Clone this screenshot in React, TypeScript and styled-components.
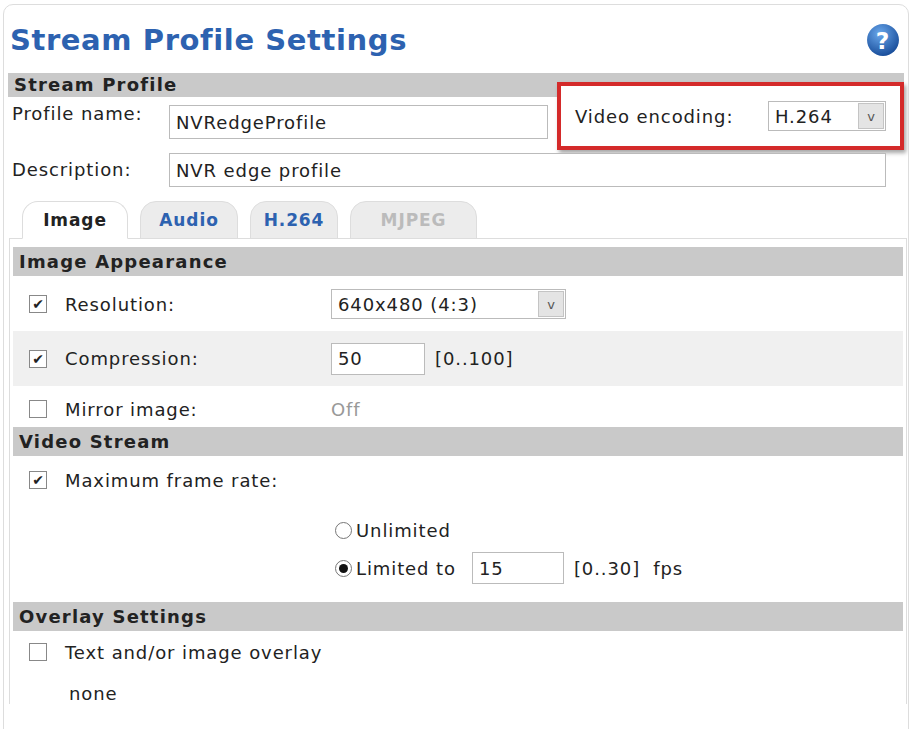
import styled, { createGlobalStyle } from "styled-components";

const Global = createGlobalStyle`
  html, body { margin: 0; padding: 0; background: #fff; }
  body { font-family: "DejaVu Sans", sans-serif; color: #222; letter-spacing: 0.9px; }
`;

const Card = styled.div`
  width: 906px;
  height: 740px;
  margin: 4px 0 0 3px;
  border: 1px solid #ddd;
  border-radius: 10px;
  box-sizing: border-box;
  padding: 0 4px;
  overflow: hidden;
`;

const TitleRow = styled.div`
  display: flex;
  justify-content: space-between;
  align-items: center;
  height: 68px;
  padding: 2px 4px 0 2px;
  box-sizing: border-box;
`;

const Title = styled.h1`
  margin: 0;
  font-size: 29px;
  font-weight: bold;
  color: #2d62b0;
  letter-spacing: 0.6px;
`;

const SectionBar = styled.div<{ $inset?: boolean; $mt?: number }>`
  background: #c9c9c9;
  font-weight: bold;
  font-size: 18px;
  letter-spacing: 1.2px;
  height: ${(p) => (p.$inset ? 29 : 24)}px;
  line-height: ${(p) => (p.$inset ? 29 : 24)}px;
  padding-left: 6px;
  margin-top: ${(p) => p.$mt ?? 0}px;
`;

const FieldRow = styled.div<{ $mt: number }>`
  display: flex;
  align-items: flex-start;
  font-size: 18px;
  padding-left: 4px;
  margin-top: ${(p) => p.$mt}px;
`;

const Label = styled.span`
  width: 157px;
  flex-shrink: 0;
  padding-top: 6px;
`;

const TextBox = styled.div<{ $w: number; $h?: number; $mt?: number }>`
  width: ${(p) => p.$w}px;
  height: ${(p) => p.$h ?? 32}px;
  margin-top: ${(p) => p.$mt ?? 0}px;
  border: 1px solid #bbb;
  box-sizing: border-box;
  padding: 0 6px;
  display: flex;
  align-items: center;
  font-size: 18px;
  background: #fff;
  flex-shrink: 0;
`;

const Highlight = styled.div`
  border: 4px solid #d42a2a;
  box-shadow: 2px 3px 4px rgba(0, 0, 0, 0.35);
  display: flex;
  align-items: center;
  justify-content: space-between;
  box-sizing: border-box;
  width: 349px;
  padding: 0 14px 0 14px;
  height: 68px;
  margin-top: -15px;
  margin-left: 9px;
  font-size: 18px;
  background: #fff;
`;

const Select = styled.div<{ $w: number }>`
  width: ${(p) => p.$w}px;
  height: 30px;
  border: 1px solid #bbb;
  box-sizing: border-box;
  display: flex;
  align-items: center;
  justify-content: space-between;
  padding-left: 6px;
  font-size: 18px;
  background: #fff;
`;

const Arrow = styled.span`
  width: 26px;
  height: 26px;
  margin-right: 1px;
  background: #e4e4e4;
  border: 1px solid #c4c4c4;
  box-sizing: border-box;
  display: flex;
  align-items: center;
  justify-content: center;
  font-size: 13px;
  color: #555;
  letter-spacing: 0;
`;

const Tabs = styled.div`
  display: flex;
  gap: 12px;
  padding: 14px 0 0 14px;
`;

const Tab = styled.div<{ $active?: boolean; $disabled?: boolean; $w: number }>`
  width: ${(p) => p.$w}px;
  height: 38px;
  box-sizing: border-box;
  border: 1px solid #ddd;
  border-bottom: ${(p) => (p.$active ? "1px solid #fff" : "1px solid #ddd")};
  border-radius: 16px 16px 0 0;
  background: ${(p) => (p.$active ? "#fff" : "#ececec")};
  color: ${(p) => (p.$disabled ? "#bbb" : p.$active ? "#222" : "#2d62b0")};
  font-weight: bold;
  font-size: 17px;
  display: flex;
  align-items: center;
  justify-content: center;
  margin-bottom: -1px;
  position: relative;
`;

const Panel = styled.div`
  border: 1px solid #ddd;
  border-bottom: none;
  padding: 8px 3px 0;
  margin-left: 1px;
  width: 898px;
  box-sizing: border-box;
`;

const OptionRow = styled.div<{ $h: number; $mt: number; $shade?: boolean }>`
  display: flex;
  align-items: center;
  height: ${(p) => p.$h}px;
  margin-top: ${(p) => p.$mt}px;
  background: ${(p) => (p.$shade ? "#f0f0f0" : "transparent")};
  font-size: 18px;
  padding-left: 16px;
`;

const Check = styled.span`
  width: 18px;
  height: 18px;
  border: 1px solid #888;
  box-sizing: border-box;
  display: inline-flex;
  align-items: center;
  justify-content: center;
  margin-right: 18px;
  font-size: 14px;
  letter-spacing: 0;
  background: #fff;
`;

const OptLabel = styled.span`
  width: 266px;
`;

const Muted = styled.span`
  color: #999;
`;

const Note = styled.span`
  margin-left: 10px;
`;

const RadioRow = styled.div<{ $mt?: number }>`
  display: flex;
  align-items: center;
  height: 38px;
  margin-top: ${(p) => p.$mt ?? 0}px;
  padding-left: 322px;
  font-size: 18px;
`;

const Radio = styled.span<{ $on?: boolean }>`
  width: 17px;
  height: 17px;
  border: 1px solid #777;
  border-radius: 50%;
  box-sizing: border-box;
  margin-right: 4px;
  display: inline-flex;
  align-items: center;
  justify-content: center;
  &::after {
    content: "";
    width: 9px;
    height: 9px;
    border-radius: 50%;
    background: ${(p) => (p.$on ? "#111" : "transparent")};
  }
`;

const Plain = styled.div`
  font-size: 18px;
  padding: 14px 0 0 56px;
`;

const HelpIcon = () => (
  <svg width="34" height="34" viewBox="0 0 32 32">
    <defs>
      <radialGradient id="hg" cx="40%" cy="30%" r="70%">
        <stop offset="0" stopColor="#6aa8ec" />
        <stop offset="1" stopColor="#1a4f9c" />
      </radialGradient>
    </defs>
    <circle cx="16" cy="16" r="15" fill="url(#hg)" />
    <text x="16" y="24" textAnchor="middle" fontSize="22" fontWeight="bold" fill="#fff" fontFamily="DejaVu Sans">?</text>
  </svg>
);

export default function App() {
  return (
    <>
      <Global />
      <Card>
        <TitleRow>
          <Title>Stream Profile Settings</Title>
          <HelpIcon />
        </TitleRow>
        <SectionBar>Stream Profile</SectionBar>
        <FieldRow $mt={0}>
          <Label>Profile name:</Label>
          <TextBox $w={379} $h={34} $mt={8}>NVRedgeProfile</TextBox>
          <Highlight>
            <span>Video encoding:</span>
            <Select $w={118}>H.264<Arrow>v</Arrow></Select>
          </Highlight>
        </FieldRow>
        <FieldRow $mt={3}>
          <Label>Description:</Label>
          <TextBox $w={717} $h={34}>NVR edge profile</TextBox>
        </FieldRow>
        <Tabs>
          <Tab $active $w={106}>Image</Tab>
          <Tab $w={98}>Audio</Tab>
          <Tab $w={88}>H.264</Tab>
          <Tab $disabled $w={127}>MJPEG</Tab>
        </Tabs>
        <Panel>
          <SectionBar $inset>Image Appearance</SectionBar>
          <OptionRow $h={40} $mt={8}>
            <Check>✔</Check>
            <OptLabel>Resolution:</OptLabel>
            <Select $w={235}>640x480 (4:3)<Arrow>v</Arrow></Select>
          </OptionRow>
          <OptionRow $h={55} $mt={7} $shade>
            <Check>✔</Check>
            <OptLabel>Compression:</OptLabel>
            <TextBox $w={94}>50</TextBox>
            <Note>[0..100]</Note>
          </OptionRow>
          <OptionRow $h={30} $mt={8}>
            <Check />
            <OptLabel>Mirror image:</OptLabel>
            <Muted>Off</Muted>
          </OptionRow>
          <SectionBar $inset $mt={3}>Video Stream</SectionBar>
          <OptionRow $h={32} $mt={8}>
            <Check>✔</Check>
            <OptLabel>Maximum frame rate:</OptLabel>
          </OptionRow>
          <RadioRow $mt={15}>
            <Radio />Unlimited
          </RadioRow>
          <RadioRow>
            <Radio $on />Limited to
            <TextBox $w={92} style={{ marginLeft: 16 }}>15</TextBox>
            <Note>[0..30]&nbsp; fps</Note>
          </RadioRow>
          <SectionBar $inset $mt={15}>Overlay Settings</SectionBar>
          <OptionRow $h={34} $mt={4}>
            <Check />
            <span>Text and/or image overlay</span>
          </OptionRow>
          <Plain>none</Plain>
        </Panel>
      </Card>
    </>
  );
}
